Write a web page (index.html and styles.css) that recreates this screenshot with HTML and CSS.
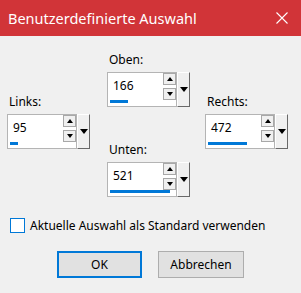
FILE: index.html
```html
<!DOCTYPE html>
<html lang="de">
<head>
    <meta charset="UTF-8">
    <title>Benutzerdefinierte Auswahl</title>
    <link rel="stylesheet" href="styles.css">
</head>
<body>
    <div class="dialog">
        <!-- Title bar -->
        <div class="titlebar">
            <span class="title">Benutzerdefinierte Auswahl</span>
            <svg class="close" width="12" height="12" viewBox="0 0 12 12">
                <path d="M0.5 0.5 L11.5 11.5 M11.5 0.5 L0.5 11.5" stroke="#fff" stroke-width="1.1" fill="none"/>
            </svg>
        </div>

        <!-- Spin fields -->
        <div class="fields">
            <div class="col side">
                <div class="field">
                    <div class="label">Links:</div>
                    <div class="spin">
                        <div class="edit">
                            <div class="edit-row">
                                <span class="value">95</span>
                                <div class="arrows"><span class="arrow up"></span><span class="arrow down"></span></div>
                            </div>
                            <div class="bar-track"><div class="bar" style="width: 8px"></div></div>
                        </div>
                        <div class="drop"></div>
                    </div>
                </div>
            </div>

            <div class="col middle">
                <div class="field">
                    <div class="label">Oben:</div>
                    <div class="spin">
                        <div class="edit">
                            <div class="edit-row">
                                <span class="value">166</span>
                                <div class="arrows"><span class="arrow up"></span><span class="arrow down"></span></div>
                            </div>
                            <div class="bar-track"><div class="bar" style="width: 18px"></div></div>
                        </div>
                        <div class="drop"></div>
                    </div>
                </div>
                <div class="field">
                    <div class="label">Unten:</div>
                    <div class="spin">
                        <div class="edit">
                            <div class="edit-row">
                                <span class="value">521</span>
                                <div class="arrows"><span class="arrow up"></span><span class="arrow down"></span></div>
                            </div>
                            <div class="bar-track"><div class="bar" style="width: 60px"></div></div>
                        </div>
                        <div class="drop"></div>
                    </div>
                </div>
            </div>

            <div class="col side">
                <div class="field">
                    <div class="label">Rechts:</div>
                    <div class="spin">
                        <div class="edit">
                            <div class="edit-row">
                                <span class="value">472</span>
                                <div class="arrows"><span class="arrow up"></span><span class="arrow down"></span></div>
                            </div>
                            <div class="bar-track"><div class="bar" style="width: 39px"></div></div>
                        </div>
                        <div class="drop"></div>
                    </div>
                </div>
            </div>
        </div>

        <!-- Default checkbox -->
        <label class="check-row">
            <span class="checkbox"></span>
            <span>Aktuelle Auswahl als Standard verwenden</span>
        </label>

        <!-- Buttons -->
        <div class="buttons">
            <button class="btn default">OK</button>
            <button class="btn">Abbrechen</button>
        </div>
    </div>
</body>
</html>
```

FILE: styles.css
```css
/* General styles */
body {
    margin: 0;
    background-color: #f0f0f0;
    font-family: "Noto Sans", "Open Sans", sans-serif;
    font-size: 12px;
    color: #000;
}
.dialog {
    width: 301px;
    height: 293px;
    overflow: hidden;
}

/* Title bar */
.titlebar {
    height: 36px;
    background-color: #d13438;
    display: flex;
    align-items: center;
    padding: 0 13px 0 8px;
    color: #fff;
}
.title {
    flex: 1;
    font-size: 14.5px;
}
.close {
    display: block;
}

/* Spin fields */
.fields {
    display: flex;
    padding: 16px 0 0 7px;
}
.col {
    width: 83px;
    display: flex;
    flex-direction: column;
}
.side {
    padding-top: 42px;
}
.middle {
    margin: 0 15px 0 17px;
    gap: 35px;
}
.label {
    height: 16px;
    line-height: 16px;
    margin: 0 0 4px 2px;
}
.spin {
    display: flex;
    height: 35px;
}
.edit {
    width: 68px;
    background-color: #fff;
    border: 1px solid #b4b4b4;
    display: flex;
    flex-direction: column;
}
.edit-row {
    display: flex;
    height: 27px;
}
.value {
    flex: 1;
    padding: 5px 0 0 5px;
    line-height: 16px;
}
.arrows {
    width: 13px;
    display: flex;
    flex-direction: column;
    justify-content: space-between;
}
.arrow {
    height: 10px;
    border: 1px solid #a8a8a8;
    background-color: #f0f0f0;
    display: flex;
    align-items: center;
    justify-content: center;
}
.arrow::after {
    content: "";
    border-left: 3px solid transparent;
    border-right: 3px solid transparent;
}
.up::after {
    border-bottom: 4px solid #000;
}
.down::after {
    border-top: 4px solid #000;
}
.bar-track {
    height: 3px;
    padding-left: 2px;
}
.bar {
    height: 3px;
    background-color: #0078d7;
}
.drop {
    width: 11px;
    border-top: 1px solid #fff;
    border-left: 1px solid #fff;
    border-right: 1px solid #696969;
    border-bottom: 1px solid #696969;
    background-color: #f0f0f0;
    display: flex;
    align-items: center;
    justify-content: center;
}
.drop::after {
    content: "";
    border-left: 4px solid transparent;
    border-right: 4px solid transparent;
    border-top: 5px solid #000;
}

/* Checkbox */
.check-row {
    display: flex;
    align-items: center;
    margin: 21px 0 0 10px;
    height: 15px;
}
.checkbox {
    width: 13px;
    height: 13px;
    border: 1px solid #0078d7;
    background-color: #fff;
    margin-right: 5px;
}

/* Buttons */
.buttons {
    display: flex;
    gap: 16px;
    margin: 18px 0 0 57px;
}
.btn {
    width: 86px;
    height: 27px;
    font-family: inherit;
    font-size: 12px;
    color: #000;
    background-color: #e1e1e1;
    border: 1px solid #adadad;
    padding: 0;
}
.btn.default {
    width: 85px;
    border: 2px solid #0078d7;
}
```
